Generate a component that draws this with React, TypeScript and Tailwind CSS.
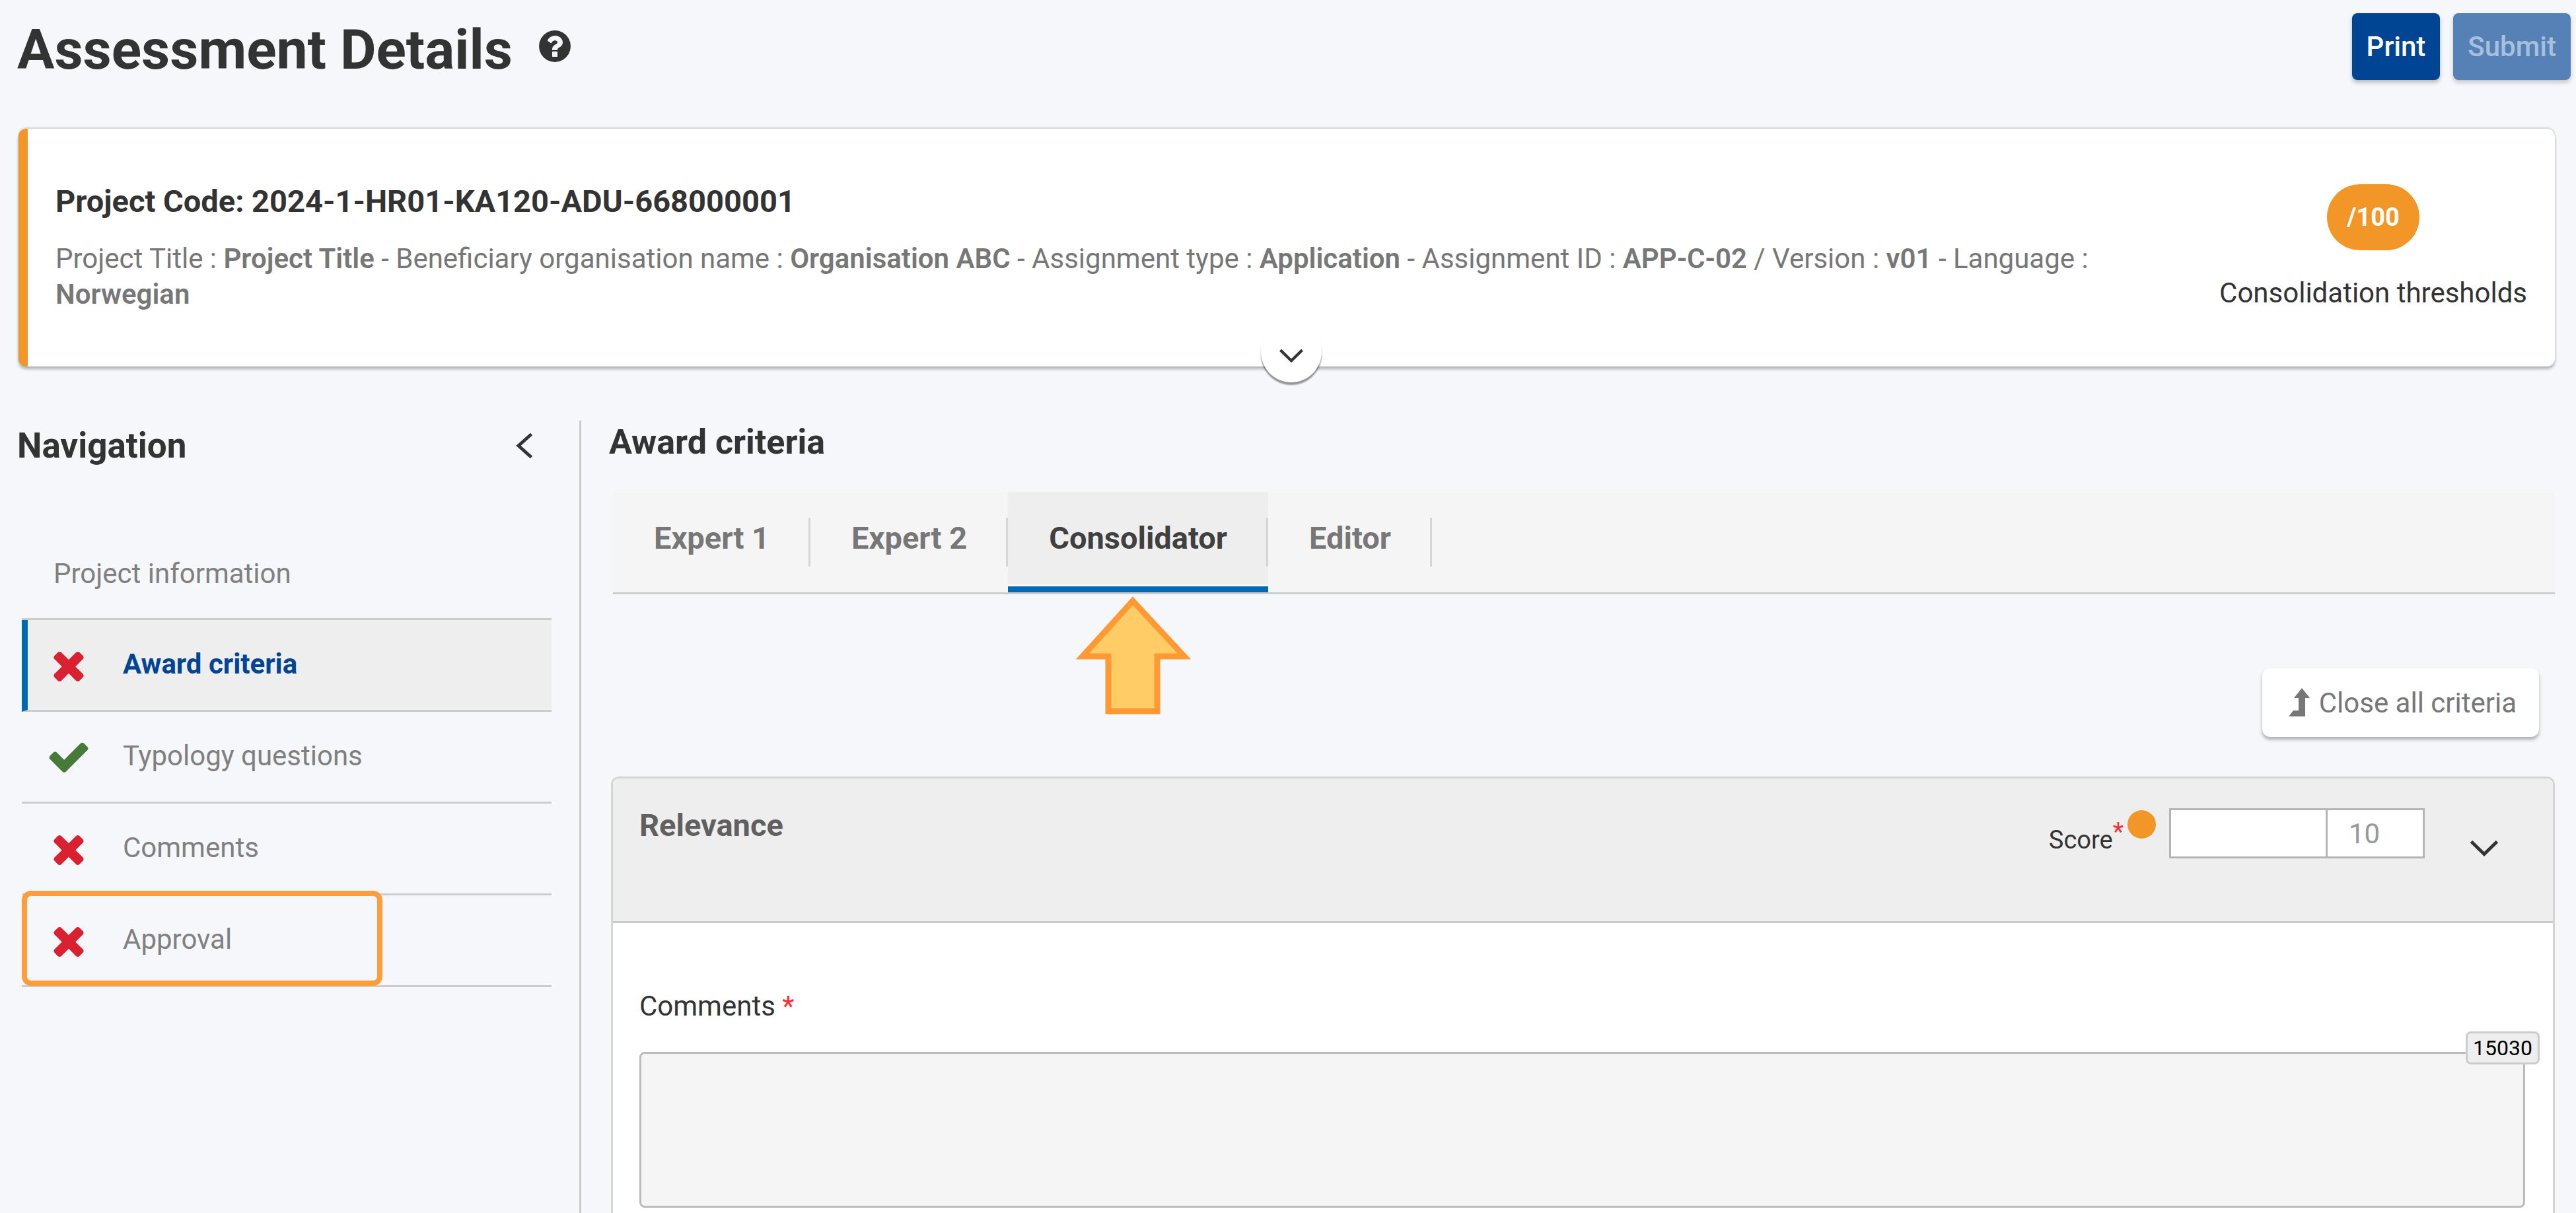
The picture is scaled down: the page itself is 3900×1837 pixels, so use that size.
import React from 'react';

type Status = 'ok' | 'error';

const TIMES =
  'M1490 1322q0 40-28 68l-136 136q-28 28-68 28t-68-28l-294-294-294 294q-28 28-68 28t-68-28l-136-136q-28-28-28-68t28-68l294-294-294-294q-28-28-28-68t28-68l136-136q28-28 68-28t68 28l294 294 294-294q28-28 68-28t68 28l136 136q28 28 28 68t-28 68l-294 294 294 294q28 28 28 68z';
const CHECK =
  'M1671 566q0 40-28 68l-724 724-136 136q-28 28-68 28t-68-28l-136-136-362-362q-28-28-28-68t28-68l136-136q28-28 68-28t68 28l294 295 656-657q28-28 68-28t68 28l136 136q28 28 28 68z';
const QUESTION =
  'M1024 1376v-192q0-14-9-23t-23-9h-192q-14 0-23 9t-9 23v192q0 14 9 23t23 9h192q14 0 23-9t9-23zm256-672q0-88-55.5-163t-138.5-116-170-41q-243 0-371 213-15 24 8 42l132 100q7 6 19 6 16 0 25-12 53-68 86-92 34-24 86-24 48 0 85.5 26t37.5 59q0 38-20 61t-68 45q-63 28-115.5 86.5t-52.5 125.5v36q0 14 9 23t23 9h192q14 0 23-9t9-23q0-19 21.5-49.5t54.5-49.5q32-18 49-28.5t46-35 44.5-48 28-60.5 12.5-81zm384 192q0 209-103 385.5t-279.5 279.5-385.5 103-385.5-103-279.5-279.5-103-385.5 103-385.5 279.5-279.5 385.5-103 385.5 103 279.5 279.5 103 385.5z';

function StatusIcon({ status }: { status: Status }) {
  return (
    <svg viewBox="0 0 1792 1792" className="size-[68px] shrink-0" aria-hidden="true">
      <path d={status === 'ok' ? CHECK : TIMES} fill={status === 'ok' ? '#467a39' : '#da2131'} />
    </svg>
  );
}

function ChevronDown({ className }: { className: string }) {
  return (
    <svg viewBox="0 0 44 26" fill="none" stroke="#333" strokeWidth="5" className={className} aria-hidden="true">
      <path d="M2.500 2.500 22 21.500 41.500 2.500" />
    </svg>
  );
}

const navItems: { label: string; status: Status; active?: boolean; marked?: boolean }[] = [
  { label: 'Award criteria', status: 'error', active: true },
  { label: 'Typology questions', status: 'ok' },
  { label: 'Comments', status: 'error' },
  { label: 'Approval', status: 'error', marked: true },
];

const tabs = ['Expert 1', 'Expert 2', 'Consolidator', 'Editor'];

function Header() {
  return (
    <header className="flex items-start justify-between pt-5 pr-2 pl-[26px]">
      <div className="flex items-center gap-9 pt-[6px]">
        <h1 className="text-[84px] leading-[100px] font-bold">Assessment Details</h1>
        <button type="button" aria-label="Help" className="pb-3">
          <svg viewBox="0 0 1792 1792" className="size-14" aria-hidden="true">
            <path d={QUESTION} fill="#333" />
          </svg>
        </button>
      </div>
      <div className="flex gap-5">
        <button type="button" className="h-[101px] rounded-lg bg-[#004494] px-[22px] text-[42px] font-medium text-white shadow-[0_4px_6px_rgba(0,0,0,0.25)]">
          Print
        </button>
        <button type="button" disabled className="h-[101px] rounded-lg bg-[#5681b7] px-[22px] text-[42px] font-medium text-[#a9c0dc] shadow-[0_4px_6px_rgba(0,0,0,0.2)]">
          Submit
        </button>
      </div>
    </header>
  );
}

function ProjectCard() {
  return (
    <section className="relative mt-[69px] mr-8 ml-7 flex h-[360px] rounded-xl border-l-[14px] border-[#f19627] bg-white px-[42px] shadow-[0_-2px_3px_rgba(0,0,0,0.14),0_4px_4px_rgba(0,0,0,0.28)]">
      <div className="min-w-0 flex-1 pt-20">
        <h2 className="text-[47px] leading-[60px] font-bold">Project Code: 2024-1-HR01-KA120-ADU-668000001</h2>
        <p className="mt-[30px] max-w-[3100px] text-[42px] leading-[54px] text-[#777]">
          Project Title : <b className="font-semibold">Project Title</b> - Beneficiary organisation name :{' '}
          <b className="font-semibold">Organisation ABC</b> - Assignment type : <b className="font-semibold">Application</b> - Assignment
          ID : <b className="font-semibold">APP-C-02</b> / Version : <b className="font-semibold">v01</b> - Language :{' '}
          <b className="font-semibold">Norwegian</b>
        </p>
      </div>
      <div className="flex shrink-0 flex-col items-center pt-[84px]">
        <span className="flex h-[100px] items-center rounded-full bg-[#f19627] px-[30px] text-[38px] font-bold text-white">/100</span>
        <span className="mt-[38px] text-[42px] leading-[54px]">Consolidation thresholds</span>
      </div>
      <button
        type="button"
        aria-label="Expand project details"
        className="absolute -bottom-6 left-1/2 flex size-[92px] -translate-x-1/2 items-center justify-center rounded-full bg-white pt-3 shadow-[0_4px_2px_rgba(0,0,0,0.4)]"
      >
        <ChevronDown className="h-[22px] w-[38px]" />
      </button>
    </section>
  );
}

function Navigation() {
  return (
    <aside className="w-[880px] shrink-0 border-r-[3px] border-[#ccc] pr-[42px] pl-[26px]">
      <div className="flex items-center justify-between pt-[6px]">
        <h2 className="text-[53px] leading-[64px] font-bold">Navigation</h2>
        <button type="button" aria-label="Collapse navigation" className="pr-7">
          <svg viewBox="0 0 26 40" fill="none" stroke="#333" strokeWidth="5" className="h-10 w-[26px]" aria-hidden="true">
            <path d="M23.500 2.500 4 20 23.500 37.500" />
          </svg>
        </button>
      </div>
      <nav className="mt-[93px] ml-[7px] text-[42px] text-[#808080]">
        <a href="#project-information" className="flex h-[139px] items-center border-b-[3px] border-[#ccc] pl-12">
          Project information
        </a>
        {navItems.map((item) => (
          <a
            key={item.label}
            href={'#' + item.label}
            className={
              'relative flex h-[139px] items-center gap-12 border-b-[3px] border-b-[#ccc] pr-4 ' +
              (item.active ? 'border-l-[9px] border-l-[#006bb4] bg-[#eee] pl-7 font-bold text-[#004494]' : 'pl-[37px]')
            }
          >
            <StatusIcon status={item.status} />
            <span className="pb-1">{item.label}</span>
            {item.marked && <span className="absolute -top-[7px] left-0 h-[144px] w-[546px] rounded-[14px] border-[8px] border-[#ff9d3b]" />}
          </a>
        ))}
      </nav>
    </aside>
  );
}

function Tabs() {
  return (
    <div role="tablist" className="mt-[43px] mr-8 ml-12 flex h-[155px] border-b-[3px] border-[#ccc] bg-[#f5f5f5]">
      {tabs.map((label) => {
        const active = label === 'Consolidator';
        return (
          <button
            key={label}
            type="button"
            role="tab"
            aria-selected={active}
            className={
              'relative flex h-[152px] items-center px-[62px] text-[47px] font-bold ' +
              (active
                ? 'border-b-[9px] border-[#006bb4] bg-[#eee] pb-[3px] text-[#404040] shadow-[inset_0_-3px_0_#f8f8f8]'
                : 'pb-3 text-[#777]')
            }
          >
            {label}
            <span className="absolute top-[39px] right-0 h-[74px] w-[3px] bg-[#d5d5d5]" />
            {active && (
              <svg viewBox="0 0 174 180" className="absolute top-[157px] left-[103px] h-[180px] w-[174px]" aria-hidden="true">
                <path d="M86 8 164 92H123V175H49V92H10Z" fill="#ffcc66" stroke="#ff9933" strokeWidth="9" />
              </svg>
            )}
          </button>
        );
      })}
    </div>
  );
}

function Criterion() {
  return (
    <section className="mt-[60px] mr-8 ml-[45px] flex grow flex-col rounded-t-xl border-[3px] border-b-0 border-[#d5d5d5] bg-white">
      <header className="flex h-[219px] items-start justify-between rounded-t-[10px] border-b-[3px] border-[#ccc] bg-[#eee] pl-10">
        <h3 className="pt-[41px] text-[47px] leading-[60px] font-bold text-[#606060]">Relevance</h3>
        <div className="flex items-start pt-[45px]">
          <label htmlFor="score" className="flex items-start pt-[21px] text-[38px] leading-[54px]">
            Score<span className="-mt-3 text-red-500">*</span>
          </label>
          <span className="mt-[3px] ml-[6px] size-[43px] rounded-full bg-[#f19627]" />
          <input id="score" type="text" className="ml-5 h-[76px] w-[240px] border-[3px] border-[#b5b5b5] bg-white px-8 text-[42px]" />
          <input
            type="text"
            aria-label="Maximum score"
            readOnly
            value="10"
            className="-ml-[3px] h-[76px] w-[150px] border-[3px] border-[#b5b5b5] bg-white px-8 text-[42px] text-[#999]"
          />
          <button type="button" aria-label="Collapse criterion" className="mt-12 mr-[82px] ml-[68px]">
            <ChevronDown className="h-[26px] w-11" />
          </button>
        </div>
      </header>
      <div className="pt-[99px] pr-[42px] pl-10">
        <label htmlFor="comments" className="text-[42px] leading-[54px]">
          Comments <span className="text-red-500">*</span>
        </label>
        <div className="relative mt-[42px]">
          <textarea id="comments" className="block h-[236px] w-full resize-none rounded-lg border-[3px] border-[#bbb] bg-[#f5f5f5] p-8 text-[42px]" />
          <span className="absolute -top-[31px] -right-[22px] flex h-[50px] items-center rounded-lg border-[3px] border-[#ccc] bg-[#eee] px-2 text-[32px] text-black">
            15030
          </span>
        </div>
      </div>
    </section>
  );
}

export default function App() {
  return (
    <div className="flex h-screen flex-col overflow-hidden bg-[#f5f7fb] font-[Roboto,sans-serif] text-[#333]">
      <Header />
      <ProjectCard />
      <div className="mt-[82px] flex grow">
        <Navigation />
        <main className="flex min-w-0 grow flex-col">
          <h2 className="ml-[42px] pt-px text-[52px] leading-[64px] font-bold">Award criteria</h2>
          <Tabs />
          <button
            type="button"
            className="mt-[112px] mr-14 flex h-[104px] items-center gap-[14px] self-end rounded-xl bg-white pr-[34px] pl-10 text-[42px] text-[#777] shadow-[0_4px_5px_rgba(0,0,0,0.3)]"
          >
            <svg viewBox="0 0 32 44" className="h-11 w-8" fill="#777" aria-hidden="true">
              <path d="M20 0 32 15H25V43H0L7 34H15V15H8Z" />
            </svg>
            Close all criteria
          </button>
          <Criterion />
        </main>
      </div>
    </div>
  );
}
